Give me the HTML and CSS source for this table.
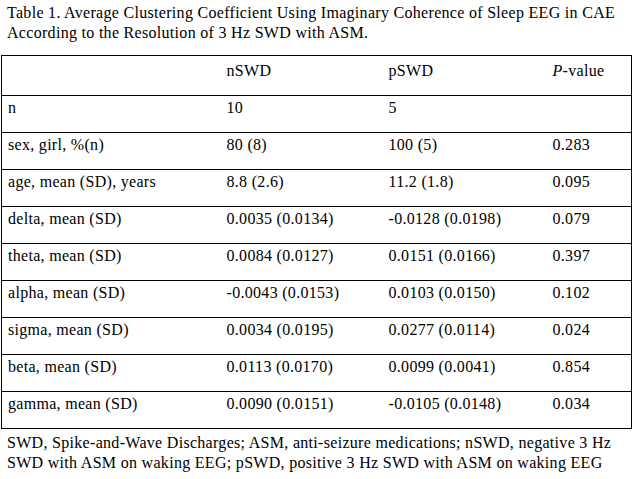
FILE: index.html
```html
<!DOCTYPE html>
<html>
<head>
<meta charset="utf-8">
<link rel="stylesheet" href="styles.css">
</head>
<body>
<div class="page">
  <p class="caption">Table 1. Average Clustering Coefficient Using Imaginary Coherence of Sleep EEG in CAE According to the Resolution of 3 Hz SWD with ASM.</p>
  <table class="data">
    <colgroup>
      <col class="c1"><col class="c2"><col class="c3"><col class="c4">
    </colgroup>
    <thead>
      <tr><th></th><th>nSWD</th><th>pSWD</th><th><i>P</i>-value</th></tr>
    </thead>
    <tbody>
      <tr><td>n</td><td>10</td><td>5</td><td></td></tr>
      <tr><td>sex, girl, %(n)</td><td>80 (8)</td><td>100 (5)</td><td>0.283</td></tr>
      <tr><td>age, mean (SD), years</td><td>8.8 (2.6)</td><td>11.2 (1.8)</td><td>0.095</td></tr>
      <tr><td>delta, mean (SD)</td><td>0.0035 (0.0134)</td><td>-0.0128 (0.0198)</td><td>0.079</td></tr>
      <tr><td>theta, mean (SD)</td><td>0.0084 (0.0127)</td><td>0.0151 (0.0166)</td><td>0.397</td></tr>
      <tr><td>alpha, mean (SD)</td><td>-0.0043 (0.0153)</td><td>0.0103 (0.0150)</td><td>0.102</td></tr>
      <tr><td>sigma, mean (SD)</td><td>0.0034 (0.0195)</td><td>0.0277 (0.0114)</td><td>0.024</td></tr>
      <tr><td>beta, mean (SD)</td><td>0.0113 (0.0170)</td><td>0.0099 (0.0041)</td><td>0.854</td></tr>
      <tr><td>gamma, mean (SD)</td><td>0.0090 (0.0151)</td><td>-0.0105 (0.0148)</td><td>0.034</td></tr>
    </tbody>
  </table>
  <p class="note">SWD, Spike-and-Wave Discharges; ASM, anti-seizure medications; nSWD, negative 3 Hz SWD with ASM on waking EEG; pSWD, positive 3 Hz SWD with ASM on waking EEG</p>
</div>
</body>
</html>
```
FILE: styles.css
```css
html, body {
  margin: 0;
  padding: 0;
  background: #ffffff;
}
body {
  font-family: "Liberation Serif", "Times New Roman", serif;
  font-size: 16px;
  color: #000000;
  letter-spacing: 0.3px;
}
.page {
  padding: 3px 0 0 1px;
}
.caption {
  margin: 0 0 12px 0;
  padding-left: 6px;
  line-height: 20px;
  width: 615px;
}
.data {
  border-collapse: collapse;
  table-layout: fixed;
  width: 630px;
  border: 1px solid #000;
}
.c1 { width: 219px; }
.c2 { width: 162px; }
.c3 { width: 164px; }
.c4 { width: 85px; }
.data th, .data td {
  font-weight: normal;
  text-align: left;
  vertical-align: top;
  line-height: 18px;
  padding: 3px 6px 15px 6px;
  border-top: 1px solid #000;
  border-bottom: 1px solid #000;
  white-space: nowrap;
}
.data th {
  padding-top: 6px;
}
.note {
  margin: 4px 0 0 0;
  padding-left: 6px;
  line-height: 20px;
  width: 615px;
}
```
